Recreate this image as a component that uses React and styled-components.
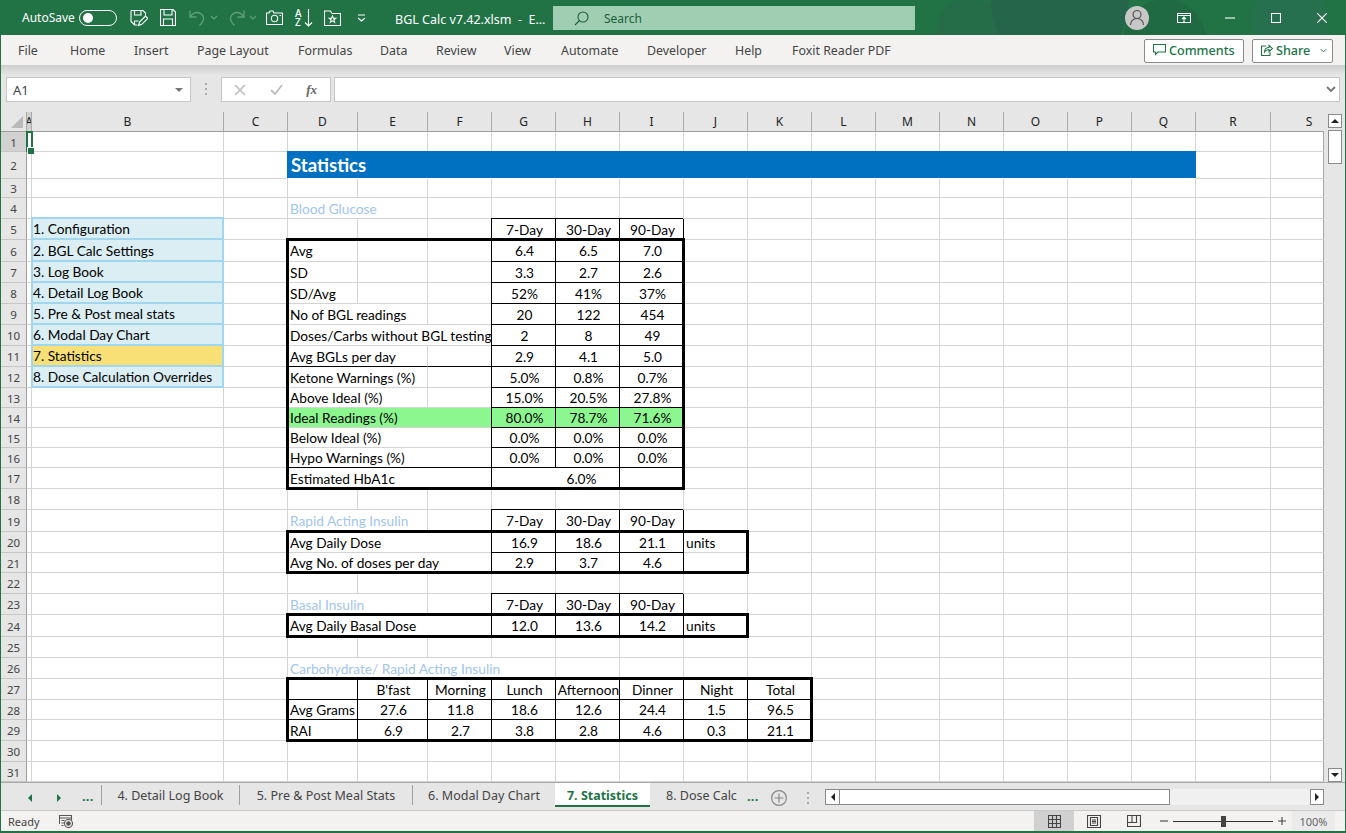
import styled, { createGlobalStyle } from "styled-components";

const GlobalStyle = createGlobalStyle`
  html, body {
    margin: 0;
    padding: 0;
    overflow: hidden;
    background: #e6e6e6;
  }
  * {
    box-sizing: border-box;
  }
`;

const UI_FONT = `"Noto Sans", "Open Sans", sans-serif`;
const CELL_FONT = `Lato, "Liberation Sans", sans-serif`;
const GREEN = "#217346";
const GRID = "#d4d4d4";

const COLS = ["A", "B", "C", "D", "E", "F", "G", "H", "I", "J", "K", "L", "M", "N", "O", "P", "Q", "R", "S"];
const COL_W = [5, 192, 64, 70, 70, 64, 64, 64, 64, 64, 64, 64, 64, 64, 64, 64, 64, 75, 53];
const ROW_H = [
  20, 27, 19, 21, 21, 22, 21, 21, 21, 21, 21, 21, 20, 20, 20, 20, 21, 21, 22, 21, 20, 21, 21, 22, 21, 21, 21, 20, 21,
  21, 20,
];

const gridCols = `26px ${COL_W.map((w) => `${w}px`).join(" ")}`;
const gridRows = `20px ${ROW_H.map((h) => `${h}px`).join(" ")}`;

const Window = styled.div`
  width: 1346px;
  height: 833px;
  display: flex;
  flex-direction: column;
  border-left: 1px solid ${GREEN};
  border-right: 1px solid ${GREEN};
  border-bottom: 2px solid ${GREEN};
  font-family: ${UI_FONT};
  background: #e6e6e6;
  overflow: hidden;
`;

/* title bar */
const TitleBar = styled.div`
  height: 35px;
  flex: none;
  margin: 0 -1px;
  display: flex;
  align-items: center;
  color: #fff;
  background:
    radial-gradient(circle at 1060px 2px, #25664a 0 68px, transparent 70px),
    radial-gradient(circle at 1165px 40px, #1f6a42 0 40px, transparent 42px),
    radial-gradient(circle at 1290px 20px, #27704d 0 36px, transparent 38px),
    radial-gradient(circle at 970px 30px, #256d48 0 32px, transparent 34px),
    ${GREEN};
`;

const AutoSave = styled.span`
  margin-left: 22px;
  width: 57px;
  font-size: 12px;
`;

const Toggle = styled.span`
  width: 38px;
  height: 16px;
  border: 1px solid #fff;
  border-radius: 8px;
  display: flex;
  align-items: center;
  padding-left: 3px;

  &::before {
    content: "";
    width: 10px;
    height: 10px;
    border-radius: 50%;
    background: #fff;
  }
`;

const Qat = styled.div`
  margin-left: ${(p) => p.$ml}px;
  display: flex;
  align-items: center;
  height: 18px;
`;

const Icon = styled.svg`
  display: block;
  flex: none;
  fill: none;
  margin-left: ${(p) => p.$ml || 0}px;
  stroke: ${(p) => p.$color || "currentColor"};
  stroke-width: ${(p) => p.$sw || 1.1};
`;

const SortLetters = styled.div`
  width: 9px;
  display: flex;
  flex-direction: column;
  font-size: 10px;
  font-weight: 500;
  line-height: 9px;
`;

const DocTitle = styled.span`
  margin-left: 29px;
  margin-top: 3px;
  width: 158px;
  font-size: 12.5px;
  white-space: pre;
`;

const SearchBox = styled.div`
  width: 362px;
  height: 24px;
  margin-top: 1px;
  display: flex;
  align-items: center;
  padding-left: 21px;
  gap: 15px;
  background: #a0ceb3;
  color: #1d5f3b;
  font-size: 12px;
`;

const TitleRight = styled.div`
  margin-left: auto;
  padding-right: 1px;
  display: flex;
  align-items: center;
  height: 100%;
`;

const Avatar = styled.div`
  width: 24px;
  height: 24px;
  border-radius: 50%;
  background: #c8c8c8;
  display: flex;
  align-items: center;
  justify-content: center;
  margin-right: 28px;
`;

const WinBtn = styled.div`
  width: ${(p) => p.$w}px;
  margin-left: ${(p) => p.$ml || 0}px;
  display: flex;
  justify-content: center;
`;

/* ribbon tabs */
const RibbonBar = styled.div`
  height: 30px;
  flex: none;
  display: flex;
  align-items: center;
  padding-left: 17px;
  background: #f3f2f1;
`;

const RibbonTab = styled.span`
  width: ${(p) => p.$w}px;
  flex: none;
  font-size: 12.4px;
  color: #444;
  white-space: nowrap;
`;

const RibbonActions = styled.div`
  margin-left: auto;
  display: flex;
  gap: 8px;
  padding-right: 12px;
`;

const ActionBtn = styled.div`
  height: 24px;
  margin-top: 1px;
  width: ${(p) => p.$w}px;
  padding: 0 0 1px 8px;
  background: #fff;
  border: 1px solid #8a8a8a;
  border-radius: 2px;
  display: flex;
  align-items: center;
  gap: 3px;
  color: ${GREEN};
  font-size: 12.6px;
  font-weight: 500;
`;

/* formula bar */
const FormulaArea = styled.div`
  height: 47px;
  flex: none;
  display: flex;
  padding: 12px 5px 10px 5px;
  background: linear-gradient(#cdcdcd, #e6e6e6 10px);
`;

const NameBox = styled.div`
  width: 185px;
  height: 25px;
  background: #fff;
  border: 1px solid #c6c6c6;
  display: flex;
  align-items: center;
  justify-content: space-between;
  padding: 0 7px 0 6px;
  font-size: 13px;
  color: #444;

  &::after {
    content: "";
    border-left: 4px solid transparent;
    border-right: 4px solid transparent;
    border-top: 4px solid #777;
  }
`;

const DotsSlot = styled.div`
  width: 30px;
  display: flex;
  align-items: center;
  justify-content: center;
`;

const FxBox = styled.div`
  width: 110px;
  height: 25px;
  margin-right: 3px;
  background: #fff;
  border: 1px solid #c6c6c6;
  display: flex;
  align-items: center;
  justify-content: space-between;
  padding: 0 13px 0 12px;
`;

const FxText = styled.span`
  font-family: "Liberation Serif", serif;
  font-style: italic;
  font-weight: 700;
  font-size: 13px;
  color: #666;
`;

const FormulaInput = styled.div`
  flex: 1;
  height: 25px;
  background: #fff;
  border: 1px solid #c6c6c6;
  display: flex;
  align-items: center;
  justify-content: flex-end;
  padding-right: 3px;
`;

/* sheet */
const SheetRow = styled.div`
  flex: 1;
  min-height: 0;
  display: flex;
  overflow: hidden;
`;

const SheetWrap = styled.div`
  position: relative;
  width: 1323px;
  flex: none;
  overflow: hidden;
  background: #fff;
`;

const CellGrid = styled.div`
  display: grid;
  grid-template-columns: ${gridCols};
  grid-template-rows: ${gridRows};
`;

const OverlayGrid = styled(CellGrid)`
  position: absolute;
  inset: 0;
  pointer-events: none;
`;

const Corner = styled.div`
  background: #e6e6e6;
  border-right: 1px solid #a8a8a8;
  border-bottom: 1px solid #9e9e9e;
  display: flex;
  align-items: flex-end;
  justify-content: flex-end;
  padding: 0 3px 3px 0;

  &::after {
    content: "";
    width: 12px;
    height: 12px;
    background: #b9b9b9;
    clip-path: polygon(100% 0, 100% 100%, 0 100%);
  }
`;

const ColHead = styled.div`
  background: ${(p) => (p.$active ? "#d2d2d2" : "#e6e6e6")};
  border-right: ${(p) => (p.$last ? "none" : "1px solid #a8a8a8")};
  border-bottom: 1px solid #9e9e9e;
  display: flex;
  align-items: center;
  justify-content: center;
  padding-left: ${(p) => (p.$last ? "23px" : "0")};
  font-size: 12px;
  color: #222;
  overflow: hidden;
`;

const RowHead = styled.div`
  background: ${(p) => (p.$active ? "#d2d2d2" : "#e6e6e6")};
  border-right: 1px solid #9e9e9e;
  border-bottom: 1px solid #c6c6c6;
  display: flex;
  align-items: center;
  justify-content: center;
  padding-top: 1px;
  font-size: 11.5px;
  color: #444;
`;

const Cell = styled.div`
  grid-column: span ${(p) => p.$span || 1};
  min-width: 0;
  display: flex;
  align-items: center;
  justify-content: ${(p) => (p.$center ? "center" : "flex-start")};
  padding: 0 0 0 ${(p) => p.$pad ?? 2}px;
  border-right: 1px solid ${(p) => (p.$boxed ? "#000" : p.$edge ? "#a6a6a6" : GRID)};
  border-bottom: 1px solid ${(p) => (p.$boxed || p.$under ? "#000" : GRID)};
  box-shadow: ${(p) => (p.$boxed ? "-1px -1px 0 #000" : "none")};
  background: ${(p) => p.$bg || "transparent"};
  color: ${(p) => p.$color || "#000"};
  font-family: ${CELL_FONT};
  font-size: 13.7px;
  white-space: nowrap;
`;

const TitleCell = styled(Cell)`
  margin: -1px 0 1px -1px;
  padding: 0 0 0 4px;
  border: none;
  font-size: 18.6px;
  font-weight: 700;
  color: #fff;
  background: #0070c0;
`;

const NavCell = styled(Cell)`
  margin: -2px 0 0 -1px;
  padding: 0;
  border: 2px solid #a0d6ee;
  background: ${(p) => (p.$current ? "#f8e076" : "#daeef3")};
`;

const ThickBox = styled.div`
  grid-column: ${(p) => p.$col};
  grid-row: ${(p) => p.$row};
  margin: -2px -1px -1px -2px;
  border: 3px solid #000;
`;

const Selection = styled.div`
  grid-column: 2;
  grid-row: 2;
  position: relative;
  margin: -1px -1px 0 -1px;
  border: 2px solid ${GREEN};

  &::after {
    content: "";
    position: absolute;
    right: -3px;
    bottom: -4px;
    width: 6px;
    height: 6px;
    background: ${GREEN};
    border: 1px solid #fff;
    border-width: 1px 0 0 1px;
  }
`;

/* vertical scroll bar */
const VScroll = styled.div`
  flex: 1;
  display: flex;
  flex-direction: column;
  padding: 2px 3px 0 4px;
  background: #e6e6e6;
`;

const ScrollBtn = styled.div`
  width: ${(p) => p.$w || 14}px;
  height: ${(p) => p.$h || 14}px;
  flex: none;
  background: #fff;
  border: 1px solid #8a8a8a;
  display: flex;
  align-items: center;
  justify-content: center;
`;

const Arrow = styled.span`
  width: 0;
  height: 0;
  border: 4px solid transparent;
  ${(p) => p.$dir === "up" && `border-bottom-color: ${p.$color}; border-top-width: 0;`}
  ${(p) => p.$dir === "down" && `border-top-color: ${p.$color}; border-bottom-width: 0;`}
  ${(p) => p.$dir === "left" && `border-right-color: ${p.$color}; border-left-width: 0;`}
  ${(p) => p.$dir === "right" && `border-left-color: ${p.$color}; border-right-width: 0;`}
`;

const VThumb = styled.div`
  width: 14px;
  height: 34px;
  margin-top: 2px;
  background: #fff;
  border: 1px solid #8a8a8a;
`;

const VTrack = styled.div`
  flex: 1;
`;

/* sheet tabs */
const TabBar = styled.div`
  height: 29px;
  flex: none;
  display: flex;
  align-items: flex-start;
  padding-right: 21px;
  background: #e6e6e6;
  border-top: 1px solid #a8a8a8;
  border-bottom: 1px solid #c8c8c8;
`;

const TabNav = styled.div`
  width: 100px;
  height: 24px;
  margin-top: 3px;
  flex: none;
  display: flex;
  align-items: center;
  padding-left: 27px;
  gap: 25px;
`;

const GreenDots = styled.span`
  color: ${GREEN};
  font-size: 13px;
  font-weight: 700;
  letter-spacing: 0.2px;
  line-height: 1;
  margin-top: -4px;
  margin-left: ${(p) => p.$ml || 0}px;
`;

const SheetTab = styled.div`
  width: ${(p) => p.$w}px;
  flex: none;
  height: ${(p) => (p.$active ? "25px" : "20px")};
  margin-top: ${(p) => (p.$active ? "-1px" : "2px")};
  padding-top: ${(p) => (p.$active ? "2px" : "0")};
  display: flex;
  align-items: center;
  justify-content: center;
  font-size: 12.5px;
  white-space: nowrap;
  overflow: hidden;
  color: ${(p) => (p.$active ? GREEN : "#444")};
  font-weight: ${(p) => (p.$active ? 700 : 400)};
  background: ${(p) => (p.$active ? "#fff" : "transparent")};
  border-left: ${(p) => (p.$sep ? "1px solid #a0a0a0" : "none")};
  border-bottom: ${(p) => (p.$active ? `2px solid ${GREEN}` : "none")};
  border-top: ${(p) => (p.$active ? "1px solid #a8a8a8" : "none")};
`;

const ClippedTab = styled.div`
  width: 97px;
  flex: none;
  height: 20px;
  margin-top: 2px;
  padding-left: 16px;
  display: flex;
  align-items: center;
  font-size: 12.5px;
  white-space: nowrap;
  color: #444;
  overflow: hidden;
`;

const TabTools = styled.div`
  height: 24px;
  margin-top: 3px;
  display: flex;
  align-items: center;
  flex: none;
`;

const HScroll = styled.div`
  margin-left: auto;
  width: 499px;
  height: 16px;
  margin-top: 6px;
  display: flex;
  background: #f0f0f0;
`;

const HThumb = styled.div`
  width: 330px;
  height: 100%;
  background: #fff;
  border: 1px solid #8a8a8a;
  border-left: none;
`;

/* status bar */
const StatusBar = styled.div`
  height: 20px;
  flex: none;
  display: flex;
  align-items: center;
  padding-left: 7px;
  padding-right: 10px;
  background: #f3f2f1;
  font-size: 11px;
  color: #444;
`;

const StatusIcon = styled.div`
  margin-left: 19px;
`;

const ViewBtn = styled.div`
  width: 40px;
  height: 20px;
  display: flex;
  align-items: center;
  justify-content: center;
  background: ${(p) => (p.$active ? "#d0d0d0" : "transparent")};
`;

const ViewGroup = styled.div`
  margin-left: auto;
  display: flex;
`;

const ZoomGroup = styled.div`
  width: 138px;
  display: flex;
  align-items: center;
  padding-left: 6px;
  gap: 5px;
`;

const ZoomTrack = styled.div`
  position: relative;
  width: 100px;
  height: 1px;
  background: #333;

  &::after {
    content: "";
    position: absolute;
    left: 48px;
    top: -5px;
    width: 5px;
    height: 11px;
    background: #444;
  }
`;

const ZoomPct = styled.div`
  width: 43px;
  height: 20px;
  display: flex;
  align-items: center;
  justify-content: center;
  background: #ebebeb;
  color: #666;
`;

/* data */
const nums = (a, b, c) => ({
  G: { t: a, center: true, boxed: true },
  H: { t: b, center: true, boxed: true },
  I: { t: c, center: true, boxed: true },
});
const days = nums("7-Day", "30-Day", "90-Day");
const sub = (t, span) => ({ D: { t, span, color: "#a3c5ee" } });
const nav = (t, current) => ({ B: { t, nav: true, current } });
const colored = (row, bg) => {
  const out = {};
  Object.keys(row).forEach((k) => {
    out[k] = { ...row[k], bg };
  });
  return out;
};
const carb = (label, vals) => {
  const out = { D: { t: label, boxed: true } };
  ["E", "F", "G", "H", "I", "J", "K"].forEach((c, i) => {
    out[c] = { t: vals[i], center: true, boxed: true };
  });
  return out;
};

const SHEET = {
  2: { D: { t: "Statistics", span: 14, title: true } },
  4: sub("Blood Glucose", 2),
  5: { ...nav("1. Configuration"), ...days },
  6: { ...nav("2. BGL Calc Settings"), D: { t: "Avg" }, ...nums("6.4", "6.5", "7.0") },
  7: { ...nav("3. Log Book"), D: { t: "SD" }, ...nums("3.3", "2.7", "2.6") },
  8: { ...nav("4. Detail Log Book"), D: { t: "SD/Avg" }, ...nums("52%", "41%", "37%") },
  9: { ...nav("5. Pre & Post meal stats"), D: { t: "No of BGL readings", span: 2 }, ...nums("20", "122", "454") },
  10: {
    ...nav("6. Modal Day Chart"),
    D: { t: "Doses/Carbs without BGL testing", span: 3 },
    ...nums("2", "8", "49"),
  },
  11: {
    ...nav("7. Statistics", true),
    D: { t: "Avg BGLs per day", span: 2, under: true },
    F: { under: true },
    ...nums("2.9", "4.1", "5.0"),
  },
  12: {
    ...nav("8. Dose Calculation Overrides"),
    D: { t: "Ketone Warnings (%)", span: 2 },
    ...nums("5.0%", "0.8%", "0.7%"),
  },
  13: { D: { t: "Above Ideal (%)", span: 2 }, ...nums("15.0%", "20.5%", "27.8%") },
  14: colored({ D: { t: "Ideal Readings (%)", span: 3 }, ...nums("80.0%", "78.7%", "71.6%") }, "#8cf78f"),
  15: { D: { t: "Below Ideal (%)", span: 3 }, ...nums("0.0%", "0.0%", "0.0%") },
  16: { D: { t: "Hypo Warnings (%)", span: 3, under: true }, ...nums("0.0%", "0.0%", "0.0%") },
  17: {
    D: { t: "Estimated HbA1c", span: 3 },
    G: { t: "6.0%", span: 2, center: true, boxed: true, pad: 52 },
    I: { boxed: true },
  },
  19: { ...sub("Rapid Acting Insulin", 2), ...days },
  20: { D: { t: "Avg Daily Dose", span: 3 }, ...nums("16.9", "18.6", "21.1"), J: { t: "units" } },
  21: { D: { t: "Avg No. of doses per day", span: 3 }, ...nums("2.9", "3.7", "4.6") },
  23: { ...sub("Basal Insulin", 2), ...days },
  24: { D: { t: "Avg Daily Basal Dose", span: 3 }, ...nums("12.0", "13.6", "14.2"), J: { t: "units" } },
  26: sub("Carbohydrate/ Rapid Acting Insulin", 4),
  27: carb("", ["B'fast", "Morning", "Lunch", "Afternoon", "Dinner", "Night", "Total"]),
  28: carb("Avg Grams", ["27.6", "11.8", "18.6", "12.6", "24.4", "1.5", "96.5"]),
  29: carb("RAI", ["6.9", "2.7", "3.8", "2.8", "4.6", "0.3", "21.1"]),
};

const RIBBON_TABS = [
  ["File", 52],
  ["Home", 64],
  ["Insert", 63],
  ["Page Layout", 101],
  ["Formulas", 82],
  ["Data", 56],
  ["Review", 68],
  ["View", 57],
  ["Automate", 86],
  ["Developer", 88],
  ["Help", 57],
  ["Foxit Reader PDF", 110],
];

const renderRow = (r) => {
  const spec = SHEET[r] || {};
  const out = [];
  for (let i = 0; i < COLS.length; ) {
    const col = COLS[i];
    const c = spec[col] || {};
    const key = `${col}${r}`;
    const span = c.span || 1;
    if (c.title) {
      out.push(
        <TitleCell key={key} $span={span}>
          {c.t}
        </TitleCell>
      );
    } else if (c.nav) {
      out.push(
        <NavCell key={key} $current={c.current}>
          {c.t}
        </NavCell>
      );
    } else {
      out.push(
        <Cell
          key={key}
          $span={span}
          $center={c.center}
          $boxed={c.boxed}
          $under={c.under}
          $bg={c.bg}
          $color={c.color}
          $pad={c.pad}
          $edge={col === "S"}
        >
          {c.t}
        </Cell>
      );
    }
    i += span;
  }
  return out;
};

const SaveEditIcon = () => (
  <Icon width="18" height="18" viewBox="0 0 18 18">
    <path d="M1 1.5h12l2.5 2.5v3M1 1.5v11l3.5 3.5h3" />
    <path d="M4.5 1.5v4.5h6.5V1.5" />
    <path d="M8.5 16.5l1-3.5 6-6 2.3 2.3-6 6z" />
    <path d="M4.5 16v-4h4" />
  </Icon>
);

const SaveIcon = () => (
  <Icon width="16" height="17" viewBox="0 0 16 17">
    <path d="M.5.5h12.5l2.5 2.5v13.500H.5z" />
    <path d="M4 .5v5.500h8V.5" />
    <path d="M3.500 16.500V10h9v6.500" />
  </Icon>
);

const UndoIcon = ({ flip }) => (
  <Icon width="18" height="18" viewBox="0 0 18 18" $color="#5f9f7d" $sw={1.3} transform={flip ? "scale(-1 1)" : undefined}>
    <path d="M2 1.500V8h6.500" />
    <path d="M2 8c2-3 4.500-4.500 7-4.500 3.500 0 6.500 2.500 6.500 6 0 3-2 5-4 7" />
  </Icon>
);

const SmallChevron = ({ color = "#5f9f7d" }) => (
  <Icon width="8" height="5" viewBox="0 0 8 5" $color={color}>
    <path d="M1 1l3 3 3-3" />
  </Icon>
);

const CameraIcon = () => (
  <Icon width="17" height="15" viewBox="0 0 17 15">
    <path d="M.5 3h2.500l1-2h3l1 2h8.500v11.500H.5z" />
    <circle cx="8.500" cy="8.500" r="3.200" />
    <path d="M13.500 5.500h1.500" />
  </Icon>
);

const SortIcon = () => (
  <>
    <SortLetters>
      <span>A</span>
      <span>Z</span>
    </SortLetters>
    <Icon width="9" height="19" viewBox="0 0 9 19">
      <path d="M4.500 1v17M1 14.500L4.500 18 8 14.500" />
    </Icon>
  </>
);

const FolderStarIcon = () => (
  <Icon width="17" height="16" viewBox="0 0 17 16">
    <path d="M.5 1h6l1.500 2.500h8.500v12H.5z" />
    <path d="M8.500 6l.9 2.300h2.400l-1.900 1.500.7 2.400-2.100-1.400-2.100 1.400.7-2.400-1.900-1.500h2.400z" />
  </Icon>
);

const CustomizeIcon = () => (
  <Icon width="9" height="8" viewBox="0 0 9 8">
    <path d="M1 1h7M1 4l3.500 3L8 4" />
  </Icon>
);

const SearchIcon = () => (
  <Icon width="15" height="15" viewBox="0 0 15 15" $color="#1d5f3b">
    <circle cx="9" cy="6" r="5" />
    <path d="M5.500 9.500L1 14" />
  </Icon>
);

const UserIcon = () => (
  <Icon width="16" height="17" viewBox="0 0 16 17" $color="#555" $sw={1.2}>
    <circle cx="8" cy="5.500" r="4" />
    <path d="M1.500 16c0-3.500 2.500-6.500 6.500-6.500s6.500 3 6.500 6.500" />
  </Icon>
);

const Dots = ({ ml }) => (
  <Icon width="3" height="13" viewBox="0 0 3 13" $color="none" $ml={ml}>
    <rect width="2" height="2" y="0" fill="#aaa" />
    <rect width="2" height="2" y="5" fill="#aaa" />
    <rect width="2" height="2" y="10" fill="#aaa" />
  </Icon>
);

const Sheet = () => (
  <SheetWrap>
    <CellGrid>
      <Corner />
      {COLS.map((c, i) => (
        <ColHead key={c} $active={i === 0} $last={c === "S"}>
          {c}
        </ColHead>
      ))}
      {ROW_H.map((_, idx) => {
        const r = idx + 1;
        return [
          <RowHead key={`h${r}`} $active={r === 1}>
            {r}
          </RowHead>,
          ...renderRow(r),
        ];
      })}
    </CellGrid>
    <OverlayGrid>
      <Selection />
      <ThickBox $col="5 / 11" $row="7 / 19" />
      <ThickBox $col="5 / 12" $row="21 / 23" />
      <ThickBox $col="5 / 12" $row="25 / 26" />
      <ThickBox $col="5 / 13" $row="28 / 31" />
    </OverlayGrid>
  </SheetWrap>
);

const App = () => {
  return (
    <Window>
      <GlobalStyle />
      <TitleBar>
        <AutoSave>AutoSave</AutoSave>
        <Toggle />
        <Qat $ml={13}>
          <SaveEditIcon />
        </Qat>
        <Qat $ml={12}>
          <SaveIcon />
        </Qat>
        <Qat $ml={12}>
          <UndoIcon />
        </Qat>
        <Qat $ml={4}>
          <SmallChevron />
        </Qat>
        <Qat $ml={10}>
          <UndoIcon flip />
        </Qat>
        <Qat $ml={3}>
          <SmallChevron />
        </Qat>
        <Qat $ml={9}>
          <CameraIcon />
        </Qat>
        <Qat $ml={12}>
          <SortIcon />
        </Qat>
        <Qat $ml={11}>
          <FolderStarIcon />
        </Qat>
        <Qat $ml={16}>
          <CustomizeIcon />
        </Qat>
        <DocTitle>BGL Calc v7.42.xlsm  -  E...</DocTitle>
        <SearchBox>
          <SearchIcon />
          Search
        </SearchBox>
        <TitleRight>
          <Avatar>
            <UserIcon />
          </Avatar>
          <WinBtn $w={13}>
            <Icon width="14" height="10" viewBox="0 0 14 10" $color="#fff">
              <path d="M.5.5h13v9H.5zM.5 2.500h13M7 9V4.500M5 6l2-2 2 2" />
            </Icon>
          </WinBtn>
          <WinBtn $w={46} $ml={17}>
            <Icon width="10" height="10" viewBox="0 0 10 10" $color="#fff">
              <path d="M0 5h10" />
            </Icon>
          </WinBtn>
          <WinBtn $w={46}>
            <Icon width="10" height="10" viewBox="0 0 10 10" $color="#fff">
              <path d="M.5.5h9v9h-9z" />
            </Icon>
          </WinBtn>
          <WinBtn $w={46}>
            <Icon width="10" height="10" viewBox="0 0 10 10" $color="#fff">
              <path d="M0 0l10 10M10 0L0 10" />
            </Icon>
          </WinBtn>
        </TitleRight>
      </TitleBar>

      <RibbonBar>
        {RIBBON_TABS.map(([label, w]) => (
          <RibbonTab key={label} $w={w}>
            {label}
          </RibbonTab>
        ))}
        <RibbonActions>
          <ActionBtn $w={100}>
            <Icon width="13" height="12" viewBox="0 0 13 12" $color={GREEN}>
              <path d="M.5.500h12v7.500H5L2.500 10.500V8H.5z" />
            </Icon>
            Comments
          </ActionBtn>
          <ActionBtn $w={81}>
            <Icon width="12" height="12" viewBox="0 0 12 12" $color={GREEN}>
              <path d="M5 2H.5v9.500h8.500V8" />
              <path d="M3.500 8c0-3 2-4.500 4.500-4.500V1.500l3.500 3-3.500 3V5.500c-2 0-3.500 1-4.500 2.500z" />
            </Icon>
            Share
            <Icon width="7" height="5" viewBox="0 0 8 5" $color={GREEN} $ml={7}>
              <path d="M1 1l3 3 3-3" />
            </Icon>
          </ActionBtn>
        </RibbonActions>
      </RibbonBar>

      <FormulaArea>
        <NameBox>A1</NameBox>
        <DotsSlot>
          <Dots />
        </DotsSlot>
        <FxBox>
          <Icon width="12" height="12" viewBox="0 0 12 12" $color="#bdbdbd" $sw={1.6}>
            <path d="M1 1l10 10M11 1L1 11" />
          </Icon>
          <Icon width="13" height="11" viewBox="0 0 13 11" $color="#bdbdbd" $sw={1.8}>
            <path d="M1 6l4 4 7-9" />
          </Icon>
          <FxText>fx</FxText>
        </FxBox>
        <FormulaInput>
          <Icon width="10" height="7" viewBox="0 0 10 7" $color="#777" $sw={1.8}>
            <path d="M1 1l4 4 4-4" />
          </Icon>
        </FormulaInput>
      </FormulaArea>

      <SheetRow>
        <Sheet />
        <VScroll>
          <ScrollBtn>
            <Arrow $dir="up" $color="#222" />
          </ScrollBtn>
          <VThumb />
          <VTrack />
          <ScrollBtn>
            <Arrow $dir="down" $color="#222" />
          </ScrollBtn>
        </VScroll>
      </SheetRow>

      <TabBar>
        <TabNav>
          <Arrow $dir="left" $color={GREEN} />
          <Arrow $dir="right" $color={GREEN} />
          <GreenDots $ml={-4}>...</GreenDots>
        </TabNav>
        <SheetTab $w={138} $sep>
          4. Detail Log Book
        </SheetTab>
        <SheetTab $w={173} $sep>
          5. Pre &amp; Post Meal Stats
        </SheetTab>
        <SheetTab $w={143} $sep>
          6. Modal Day Chart
        </SheetTab>
        <SheetTab $w={95} $active>
          7. Statistics
        </SheetTab>
        <ClippedTab>8. Dose Calc</ClippedTab>
        <TabTools>
          <GreenDots>...</GreenDots>
          <Icon width="16" height="16" viewBox="0 0 16 16" $color="#888" $sw={1.2} $ml={12}>
            <circle cx="8" cy="8" r="7.400" />
            <path d="M8 3.500v9M3.500 8h9" />
          </Icon>
          <Dots ml={20} />
        </TabTools>
        <HScroll>
          <ScrollBtn $w={15} $h={16}>
            <Arrow $dir="left" $color="#222" />
          </ScrollBtn>
          <HThumb />
          <VTrack />
          <ScrollBtn $w={14} $h={16}>
            <Arrow $dir="right" $color="#222" />
          </ScrollBtn>
        </HScroll>
      </TabBar>

      <StatusBar>
        Ready
        <StatusIcon>
          <Icon width="14" height="13" viewBox="0 0 14 13" $color="#555">
            <path d="M.5 9V.5h12V5M.5 3h12M2.500 5.500h3M2.500 8h3M2.500 10.500h2" />
            <circle cx="9.500" cy="8.500" r="4" />
            <circle cx="9.500" cy="8.500" r="1.800" fill="#555" />
          </Icon>
        </StatusIcon>
        <ViewGroup>
          <ViewBtn $active>
            <Icon width="13" height="13" viewBox="0 0 13 13" $color="#444">
              <path d="M.5.500h12v12H.5zM4.500.500v12M8.500.500v12M.5 4.500h12M.5 8.500h12" />
            </Icon>
          </ViewBtn>
          <ViewBtn>
            <Icon width="14" height="13" viewBox="0 0 14 13" $color="#444">
              <path d="M.5.500h13v12H.5zM3.500 2.500h7v8h-7zM5 5h4M5 6.500h4M5 8h4" />
            </Icon>
          </ViewBtn>
          <ViewBtn>
            <Icon width="14" height="12" viewBox="0 0 14 12" $color="#444">
              <path d="M.5.500h13v11H.5zM.5 7.500h9V.5M5 .5v7" />
            </Icon>
          </ViewBtn>
        </ViewGroup>
        <ZoomGroup>
          <Icon width="8" height="8" viewBox="0 0 8 8" $color="#444">
            <path d="M0 4h8" />
          </Icon>
          <ZoomTrack />
          <Icon width="8" height="8" viewBox="0 0 8 8" $color="#444">
            <path d="M0 4h8M4 0v8" />
          </Icon>
        </ZoomGroup>
        <ZoomPct>100%</ZoomPct>
      </StatusBar>
    </Window>
  );
};

export default App;
